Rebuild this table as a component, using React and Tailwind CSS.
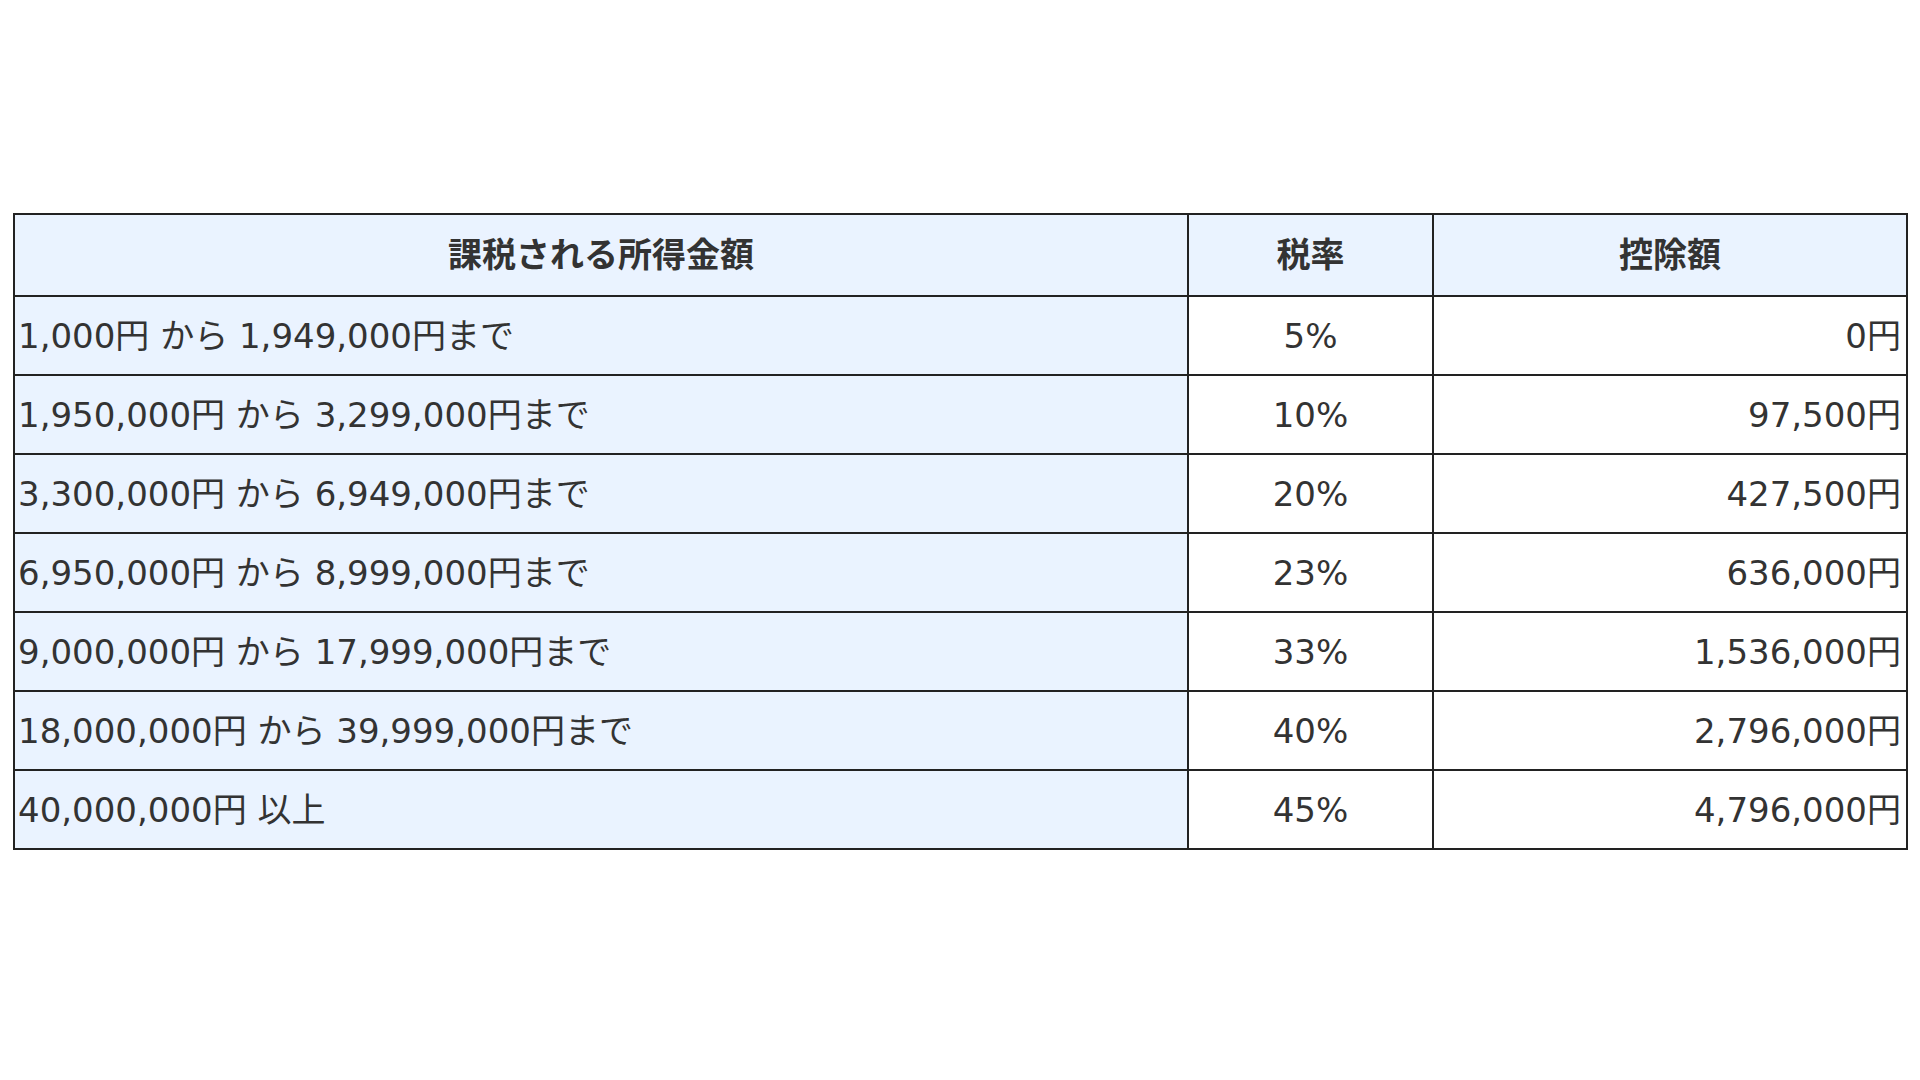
import React from 'react'

const rows = [
  ['1,000円 から 1,949,000円まで', '5%', '0円'],
  ['1,950,000円 から 3,299,000円まで', '10%', '97,500円'],
  ['3,300,000円 から 6,949,000円まで', '20%', '427,500円'],
  ['6,950,000円 から 8,999,000円まで', '23%', '636,000円'],
  ['9,000,000円 から 17,999,000円まで', '33%', '1,536,000円'],
  ['18,000,000円 から 39,999,000円まで', '40%', '2,796,000円'],
  ['40,000,000円 以上', '45%', '4,796,000円'],
]

export default function App() {
  return (
    <div className="min-h-screen w-full bg-white pt-[213px] pl-[13px] text-[#333] font-['DejaVu_Sans','Noto_Sans_CJK_JP',sans-serif]">
      <table className="w-[1895px] border-collapse border-2 border-[#222] text-[34px] leading-none">
        <colgroup>
          <col className="w-[1174px]" />
          <col className="w-[245px]" />
          <col />
        </colgroup>
        <thead>
          <tr className="h-[82px] bg-[#eaf3ff]">
            <th className="border-2 border-[#222] font-bold">課税される所得金額</th>
            <th className="border-2 border-[#222] font-bold">税率</th>
            <th className="border-2 border-[#222] font-bold">控除額</th>
          </tr>
        </thead>
        <tbody>
          {rows.map(([range, rate, deduct]) => (
            <tr key={range} className="h-[79px]">
              <td className="border-2 border-[#222] bg-[#eaf3ff] pl-[3px]">{range}</td>
              <td className="border-2 border-[#222] text-center">{rate}</td>
              <td className="border-2 border-[#222] pr-[5px] text-right">{deduct}</td>
            </tr>
          ))}
        </tbody>
      </table>
    </div>
  )
}
